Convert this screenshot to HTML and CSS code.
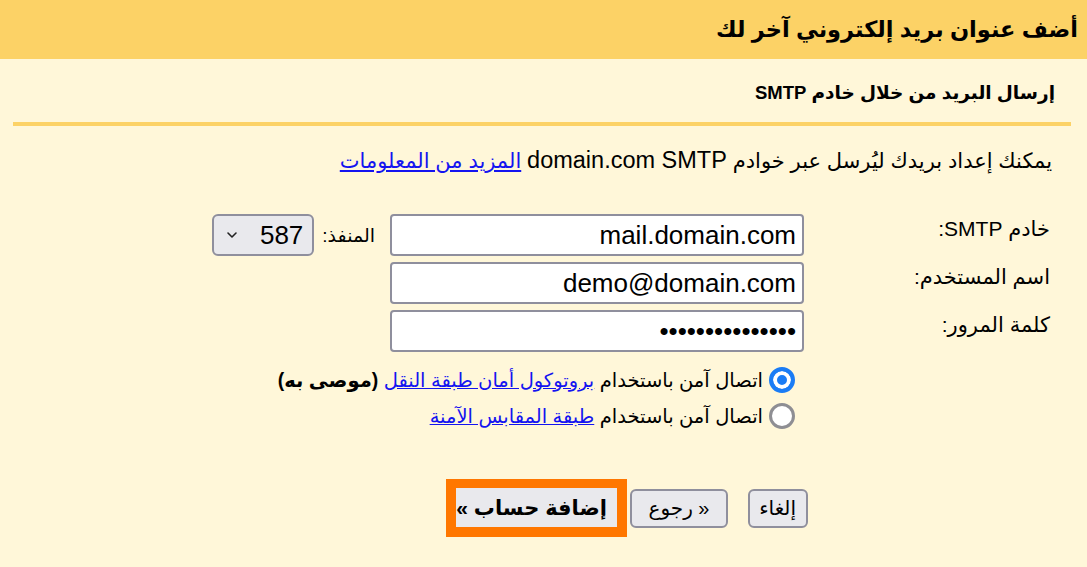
FILE: index.html
```html
<!DOCTYPE html>
<html lang="ar" dir="rtl">

<head>
    <meta charset="UTF-8">
    <meta name="viewport" content="width=device-width, initial-scale=1.0">
    <title>إضافة حساب</title>
    <link rel="stylesheet" href="styles.css">
</head>

<body>

    <h1 class="title">أضف عنوان بريد إلكتروني آخر لك</h1>

    <div class="content">
        <h2 class="subtitle">إرسال البريد من خلال خادم SMTP</h2>
        <div class="rule"></div>

        <p class="intro">يمكنك إعداد بريدك ليُرسل عبر خوادم <span class="latin">domain.com SMTP</span> <a href="#">المزيد من المعلومات</a></p>

        <div class="form">
            <label class="lbl" for="server">خادم SMTP:</label>
            <input class="field" type="text" id="server" value="mail.domain.com" dir="ltr">
            <div class="port">
                <label for="port">المنفذ:</label>
                <div class="select">
                    <span>587</span>
                    <svg width="12" height="8" viewBox="0 0 12 8"><path d="M2 2 L6 6 L10 2" fill="none" stroke="#222" stroke-width="1.6" stroke-linecap="round" stroke-linejoin="round"/></svg>
                </div>
            </div>

            <label class="lbl" for="user">اسم المستخدم:</label>
            <input class="field" type="text" id="user" value="demo@domain.com" dir="ltr">
            <div></div>

            <label class="lbl" for="pass">كلمة المرور:</label>
            <input class="field pass" type="password" id="pass" value="demopassword123" dir="ltr">
            <div></div>

            <div></div>
            <div class="radios">
                <label class="radio">
                    <span class="dot on"></span>
                    <span>اتصال آمن باستخدام <a href="#">بروتوكول أمان طبقة النقل</a> <b>(موصى به)</b></span>
                </label>
                <label class="radio">
                    <span class="dot"></span>
                    <span>اتصال آمن باستخدام <a href="#">طبقة المقابس الآمنة</a></span>
                </label>
            </div>
        </div>

        <div class="buttons">
            <button class="btn cancel">إلغاء</button>
            <button class="btn back">« رجوع</button>
            <div class="focus">
                <button class="btn main">إضافة حساب »</button>
            </div>
        </div>
    </div>

</body>

</html>
```

FILE: styles.css
```css
* {
    margin: 0;
    padding: 0;
    box-sizing: border-box;
}

body {
    background-color: #fff7d9;
    color: #000;
    font-family: "Liberation Sans", "DejaVu Sans", sans-serif;
    font-size: 21px;
}

a {
    color: #1414f0;
}

.title {
    background-color: #fcd266;
    height: 59px;
    line-height: 59px;
    padding-right: 9px;
    font-size: 22.5px;
    font-weight: bold;
}

.content {
    padding: 0 16px 0 13px;
}

.subtitle {
    font-size: 18.5px;
    line-height: 30px;
    margin-top: 19px;
    padding-right: 16px;
}

.rule {
    height: 4px;
    background: #fcd266;
    margin-top: 14px;
}

.intro {
    line-height: 30px;
    margin-top: 19px;
    padding-right: 19px;
}

.intro .latin {
    font-size: 23.5px;
}

.form {
    display: grid;
    grid-template-columns: 246px 414px auto;
    row-gap: 6px;
    margin-top: 38px;
    padding-right: 21px;
    align-items: center;
}

.lbl {
    align-self: start;
    line-height: 30px;
}

.field {
    height: 42px;
    border: 2px solid #8f8f9d;
    border-radius: 4px;
    background: #fff;
    font-family: inherit;
    font-size: 26px;
    padding: 0 6px;
    text-align: right;
    color: #000;
    outline: none;
}

.port {
    display: flex;
    align-items: center;
    gap: 8px;
    padding-right: 15px;
    font-size: 19px;
}

.select {
    display: flex;
    align-items: center;
    justify-content: space-between;
    width: 102px;
    height: 42px;
    border: 2px solid #8f8f9d;
    border-radius: 6px;
    background: #e9e9ed;
    font-size: 26px;
    padding: 0 9px 0 12px;
}

.radios {
    grid-column: 2 / 4;
    padding-right: 9px;
    margin-top: 4px;
    font-size: 19.5px;
}

.radio {
    display: flex;
    align-items: center;
    gap: 6px;
    height: 36px;
}

.dot {
    width: 26px;
    height: 26px;
    border-radius: 50%;
    border: 3px solid #8e8e93;
    background: #fff;
    flex: none;
}

.dot.on {
    border: 4px solid #1a7cf5;
    box-shadow: inset 0 0 0 4px #fff;
    background: #1a7cf5;
}

.buttons {
    display: flex;
    align-items: center;
    margin-top: 45px;
    padding-right: 263px;
}

.btn {
    height: 39px;
    border: 2px solid #8f8f9d;
    border-radius: 6px;
    background: #e9e9ed;
    font-family: inherit;
    font-size: 20px;
    padding: 0 10px;
    color: #000;
    white-space: nowrap;
}

.cancel {
    width: 60px;
    margin-left: 20px;
}

.back {
    width: 98px;
    margin-left: 3px;
}

.focus {
    background: #ff7700;
    padding: 9px 10px 10px;
}

.btn.main {
    font-weight: bold;
    font-size: 21px;
    border: none;
    border-radius: 0;
    width: 161px;
    display: block;
}
```
